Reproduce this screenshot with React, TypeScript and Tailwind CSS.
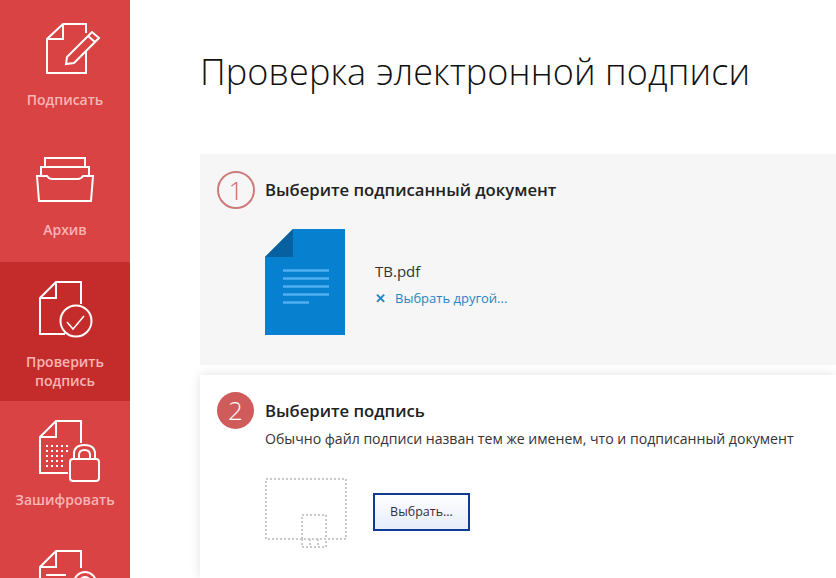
import React from 'react';

const stroke = { fill: 'none', stroke: '#ffffff', strokeWidth: 2 };

const SignIcon = () => (
    <svg width="60" height="56" viewBox="44 20 60 56" {...stroke}>
        <path d="M86 33V24H63L47 39V73H86V52" />
        <path d="M63 24V39H47" />
        <path d="M67 57L92 32L99 38L74 63L66 64Z" />
        <path d="M88 36L95 42" />
    </svg>
);

const ArchiveIcon = () => (
    <svg width="60" height="48" viewBox="35 156 60 48" {...stroke}>
        <path d="M45 167V158H85V167" />
        <path d="M41 176V167H89V176" />
        <path d="M37 176H47Q49 179 52 179H78Q81 179 83 176H93L91 201H39Z" />
    </svg>
);

const VerifyIcon = () => (
    <svg width="60" height="58" viewBox="36 280 60 58" {...stroke}>
        <path d="M81 304V282H56L40 298V334H65" />
        <path d="M56 282V298H40" />
        <circle cx="76" cy="321" r="15.5" />
        <path d="M67 322L73 329L84 316" strokeWidth="1.500" />
    </svg>
);

const EncryptIcon = () => (
    <svg width="64" height="64" viewBox="38 419 64 64" {...stroke}>
        <path d="M81 443V421H56L40 437V473H68" />
        <path d="M56 421V437H40" />
        <path d="M46 446H68M46 451H68M46 456H66M46 461H64M46 466H64" strokeDasharray="2 3" />
        <rect x="70" y="459" width="29" height="22" rx="3" />
        <path d="M74 459V454Q74 445 84.500 445Q95 445 95 454V459" />
        <path d="M79 459V455Q79 450 84.500 450Q90 450 90 455V459" />
    </svg>
);

const DecryptIcon = () => (
    <svg width="64" height="30" viewBox="38 549 64 30" {...stroke}>
        <path d="M81 568V551H56L40 567V579" />
        <path d="M56 551V567H40" />
        <path d="M46 575H66" />
        <circle cx="85" cy="583" r="11" />
        <circle cx="85" cy="583" r="6" />
    </svg>
);

const FileIcon = () => (
    <svg width="80" height="106" viewBox="0 0 80 106">
        <path d="M28 0H80V106H0V28Z" fill="#0780cf" />
        <path d="M28 0V28H0Z" fill="#07609f" />
        <path d="M18 41.500H64M18 49.500H64M18 57.500H64M18 65.500H64M18 73.500H44" stroke="#4fb0f0" strokeWidth="2.500" />
    </svg>
);

const SlotIcon = () => (
    <svg width="82" height="71" viewBox="0 0 82 71" fill="none" stroke="#c9c9c9" strokeWidth="2" strokeDasharray="2 2">
        <rect x="1" y="1" width="80" height="60" />
        <rect x="37" y="37" width="24" height="24" fill="#ffffff" />
        <path d="M37 61V69H61V61M45 61V69M53 61V69" />
    </svg>
);

const NavItem = ({ icon, label, active, height, top }: { icon: React.ReactNode; label: React.ReactNode; active?: boolean; height: string; top: string }) => (
    <div className={`flex flex-col items-center shrink-0 ${height} ${top} ${active ? 'bg-[#c42c2c]' : ''}`}>
        {icon}
        <div className="text-center text-[14px] leading-[19px] font-semibold text-[#f9b4b4]">{label}</div>
    </div>
);

export default function App() {
    return (
        <div className="flex h-[578px] w-[836px] overflow-hidden bg-white font-['Open_Sans',sans-serif]">
            <div className="flex w-[130px] shrink-0 flex-col overflow-hidden bg-[#d94343]">
                <NavItem height="h-[131px]" top="pt-[20px]" icon={<div className="mb-[14px] ml-[18px]"><SignIcon /></div>} label="Подписать" />
                <NavItem height="h-[131px]" top="pt-[25px]" icon={<div className="mb-[16px]"><ArchiveIcon /></div>} label="Архив" />
                <NavItem active height="h-[139px]" top="pt-[18px]" icon={<div className="mb-[14px] ml-[2px]"><VerifyIcon /></div>} label={<>Проверить<br />подпись</>} />
                <NavItem height="h-[148px]" top="pt-[18px]" icon={<div className="mb-[7px] ml-[10px]"><EncryptIcon /></div>} label="Зашифровать" />
                <div className="flex justify-center pl-[10px]"><DecryptIcon /></div>
            </div>

            <div className="flex min-w-0 flex-1 flex-col pl-[70px]">
                <h1 className="h-[154px] pt-[47px] text-[36px] leading-[50px] font-light tracking-[0.1px] whitespace-nowrap text-[#111111]">Проверка электронной подписи</h1>

                <div className="h-[211px] shrink-0 bg-[#f6f6f6] pt-[17px] pl-[17px]">
                    <div className="flex items-center gap-[10px]">
                        <div className="flex h-[38px] w-[38px] items-center justify-center rounded-full border-2 border-[#cd7b7b] text-[26px] font-light text-[#c96b6b]">1</div>
                        <div className="text-[16.700px] font-semibold text-[#222222]">Выберите подписанный документ</div>
                    </div>
                    <div className="mt-[20px] ml-[48px] flex items-center gap-[30px]">
                        <FileIcon />
                        <div className="flex flex-col pt-[4px]">
                            <div className="text-[15px] leading-[20px] text-[#333333]">TB.pdf</div>
                            <div className="mt-[7px] flex items-center gap-[9px] text-[13px] leading-[20px] text-[#1f87c4]">
                                <span className="text-[13px] font-bold">✕</span>
                                <span>Выбрать другой...</span>
                            </div>
                        </div>
                    </div>
                </div>

                <div className="mt-[10px] flex-1 bg-white pt-[17px] pl-[17px] shadow-[0_0_10px_rgba(0,0,0,0.12)]">
                    <div className="flex items-start gap-[11px]">
                        <div className="flex h-[37px] w-[37px] shrink-0 items-center justify-center rounded-full bg-[#cf5b5b] text-[26px] font-light text-white">2</div>
                        <div className="pt-[8px]">
                            <div className="text-[16.700px] leading-[22px] font-semibold text-[#222222]">Выберите подпись</div>
                            <div className="mt-[8px] text-[14.100px] leading-[18px] whitespace-nowrap text-[#333333]">Обычно файл подписи назван тем же именем, что и подписанный документ</div>
                        </div>
                    </div>
                    <div className="mt-[30px] ml-[48px] flex items-start gap-[26px]">
                        <SlotIcon />
                        <button className="mt-[15px] h-[38px] w-[97px] border-2 border-[#0f3a96] bg-gradient-to-b from-white to-[#e6ecfb] text-[12.500px] text-[#333333]">Выбрать...</button>
                    </div>
                </div>
            </div>
        </div>
    );
}
